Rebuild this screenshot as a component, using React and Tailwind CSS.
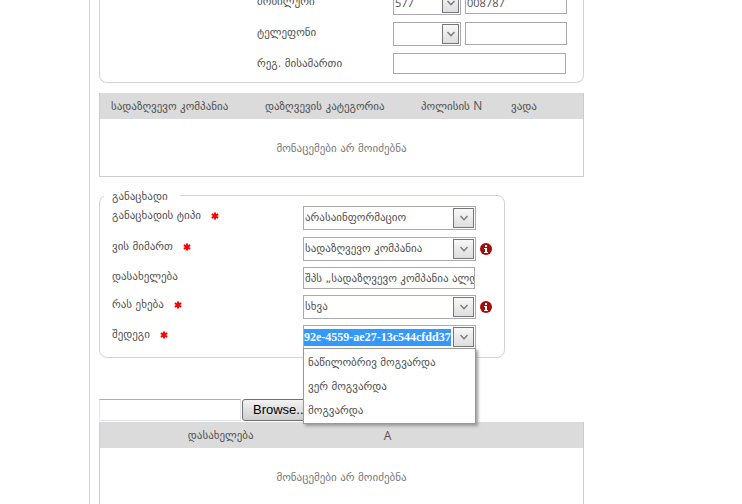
import React, { useState } from 'react';

const PHONE_CODES = ['577', '555', '599'];
const RESULTS = ['ნაწილობრივ მოგვარდა', 'ვერ მოგვარდა', 'მოგვარდა'];

const Required = () => (
  <svg className="ml-[10px] inline-block h-2 w-2" viewBox="0 0 8 8" aria-hidden="true">
    <path d="M4 0.5V7.5M0.8 2.2L7.2 5.8M7.2 2.2L0.8 5.8" stroke="#ff0000" strokeWidth="2" />
  </svg>
);

const InfoIcon = () => (
  <svg className="ml-1 h-3 w-3 shrink-0" viewBox="0 0 12 12" role="img" aria-label="info">
    <circle cx="6" cy="6" r="6" fill="#a80a0a" />
    <path d="M5 2h2v2H5zM4 5h3v4h1v1H4V9h1V6H4z" fill="#fff" />
  </svg>
);

const Arrow = () => (
  <span className="pointer-events-none flex h-5 w-full items-center justify-center border border-[#777] bg-linear-to-b from-[#f8f8f8] to-[#dedede]">
    <svg className="h-2 w-2" viewBox="0 0 8 8" fill="none">
      <path d="M0.5 2L4 5.8L7.5 2" stroke="#777" strokeWidth="1.3" />
    </svg>
  </span>
);

// Drop-down with the arrow box painted over its right side
const Select = ({ id, options, label, small }) => (
  <div className={`relative h-6 shrink-0 border border-[#a9a9ae] bg-white ${small ? "w-[68px] font-['Open_Sans',sans-serif]" : 'w-[173px]'}`}>
    <select id={id} aria-label={label} className="block h-full w-full appearance-none truncate bg-transparent pl-px outline-none">
      {options.map((o) => (
        <option key={o}>{o}</option>
      ))}
    </select>
    <span className={`pointer-events-none absolute right-px top-px ${small ? 'w-[17px]' : 'w-[21px]'}`}>
      <Arrow />
    </span>
  </div>
);

const ContactRow = ({ label, id, children }) => (
  <div className="flex h-[31px] items-start pl-[157px]">
    <label htmlFor={id} className="w-[136px] shrink-0 leading-[22px]">{label}</label>
    {children}
  </div>
);

const ClaimRow = ({ label, id, required, info, height = 'h-[30px]', children }) => (
  <div className={`flex items-start ${height}`}>
    <label htmlFor={id} className="flex w-[191px] shrink-0 items-center leading-5">
      {label}
      {required && <Required />}
    </label>
    <div className="flex items-center">
      {children}
      {info && <InfoIcon />}
    </div>
  </div>
);

const EmptyRow = ({ span }) => (
  <tr>
    <td colSpan={span} className="h-[57px] pt-1 text-center align-middle text-[#777]">მონაცემები არ მოიძებნა</td>
  </tr>
);

const App = () => {
  const [company, setCompany] = useState('შპს „სადაზღვევო კომპანია ალდაგი“');
  const [result, setResult] = useState('92e-4559-ae27-13c544cfdd37');

  return (
    <div className="h-screen overflow-hidden bg-white pl-[89px] font-['DejaVu_Sans',sans-serif] text-[11px] text-[#505050]">
      <main className="flow-root h-full border-l border-[#d3d3d3] pl-[9px]">
        <div className="w-full max-w-[485px]">
          {/* Contact details */}
          <section className="-mt-[9px] h-[92px] rounded-b-lg border border-t-0 border-[#d3d3d3]">
            <ContactRow label="მობილური" id="mobile">
              <Select id="mobile-code" label="მობილური კოდი" options={PHONE_CODES} small />
              <input id="mobile" defaultValue="008787" className="ml-1 h-[23px] w-[102px] border border-[#a9a9ae] px-px font-['Open_Sans',sans-serif] outline-none" />
            </ContactRow>
            <ContactRow label="ტელეფონი" id="phone">
              <Select id="phone-code" label="ტელეფონის კოდი" options={['']} small />
              <input id="phone" className="ml-1 h-[23px] w-[102px] border border-[#a9a9ae] px-px font-['Open_Sans',sans-serif] outline-none" />
            </ContactRow>
            <ContactRow label="რეგ. მისამართი" id="address">
              <input id="address" className="h-[21px] w-[173px] border border-[#a9a9ae] px-px outline-none" />
            </ContactRow>
          </section>

          {/* Policies */}
          <table className="mt-[10px] w-full table-fixed border-separate border-spacing-0 border border-t-0 border-[#ccc]">
            <thead>
              <tr className="h-[26px] bg-[#dbdbdb] text-left">
                <th className="w-[154px] pl-[11px] pt-0.5 font-normal">სადაზღვევო კომპანია</th>
                <th className="w-[156px] pl-[11px] pt-0.5 font-normal">დაზღვევის კატეგორია</th>
                <th className="w-[90px] pl-[11px] pt-0.5 font-normal">
                  პოლისის <span className="font-['Open_Sans',sans-serif] text-xs leading-3">N</span>
                </th>
                <th className="pl-[11px] pt-0.5 font-normal">ვადა</th>
              </tr>
            </thead>
            <tbody>
              <EmptyRow span={4} />
            </tbody>
          </table>

          {/* Claim */}
          <fieldset className="mt-2 h-[173px] w-[406px] rounded-lg border border-[#d3d3d3] pl-3 pt-px">
            <legend className="-ml-2 pl-2 pr-3 pt-1 leading-4">განაცხადი</legend>
            <ClaimRow label="განაცხადის ტიპი" id="type" required height="h-[31px]">
              <Select id="type" options={['არასაინფორმაციო', 'საინფორმაციო']} />
            </ClaimRow>
            <ClaimRow label="ვის მიმართ" id="target" required info>
              <Select id="target" options={['სადაზღვევო კომპანია']} />
            </ClaimRow>
            <ClaimRow label="დასახელება" id="company" height="h-7">
              <input
                id="company"
                value={company}
                onChange={(e) => setCompany(e.target.value)}
                className="h-[22px] w-[172px] border border-[#a9a9ae] pl-px outline-none"
              />
            </ClaimRow>
            <ClaimRow label="რას ეხება" id="subject" required info>
              <Select id="subject" options={['სხვა']} />
            </ClaimRow>
            <ClaimRow label="შედეგი" id="result" required>
              <div className="relative flex h-6 w-[173px] items-center border border-[#a9a9ae] bg-white pr-px">
                <input
                  id="result"
                  role="combobox"
                  aria-expanded="true"
                  aria-controls="result-list"
                  value={result}
                  onChange={(e) => setResult(e.target.value)}
                  className="h-[17px] min-w-0 flex-1 bg-[#3399ff] font-['Liberation_Serif',serif] text-xs font-bold text-white outline-none"
                />
                <button type="button" aria-label="გახსნა" className="ml-0.5 w-[21px]">
                  <Arrow />
                </button>
                <ul
                  id="result-list"
                  role="listbox"
                  className="absolute -left-px top-full z-10 w-[173px] border border-[#999] bg-white pt-0.5 shadow-[2px_2px_3px_#999]"
                >
                  {RESULTS.map((r) => (
                    <li key={r} role="option" aria-selected="false" onClick={() => setResult(r)} className="h-6 cursor-default pl-1 leading-6">
                      {r}
                    </li>
                  ))}
                </ul>
              </div>
            </ClaimRow>
          </fieldset>

          {/* Attachments */}
          <div className="mt-[41px] flex h-[23px]">
            <input aria-label="ფაილი" className="h-[22px] w-[142px] border border-[#e3e3eb] border-t-[#abadb3] px-1 outline-none" />
            <button
              type="button"
              className="ml-px h-[22px] rounded-[3px] border border-[#707070] bg-linear-to-b from-[#f2f2f2] to-[#cfcfcf] px-[10px] font-['Liberation_Sans',Arial,sans-serif] text-[13px] leading-5 text-black"
            >
              Browse...
            </button>
          </div>
          <table className="w-full table-fixed border-separate border-spacing-0 border border-t-0 border-[#ccc]">
            <thead>
              <tr className="h-[26px] bg-[#dbdbdb]">
                <th className="w-1/2 pt-0.5 font-normal">დასახელება</th>
                <th className="w-[92px] pt-0.5 font-['Open_Sans',sans-serif] text-xs font-normal">A</th>
                <th />
              </tr>
            </thead>
            <tbody>
              <EmptyRow span={3} />
            </tbody>
          </table>
        </div>
      </main>
    </div>
  );
};

export default App;
